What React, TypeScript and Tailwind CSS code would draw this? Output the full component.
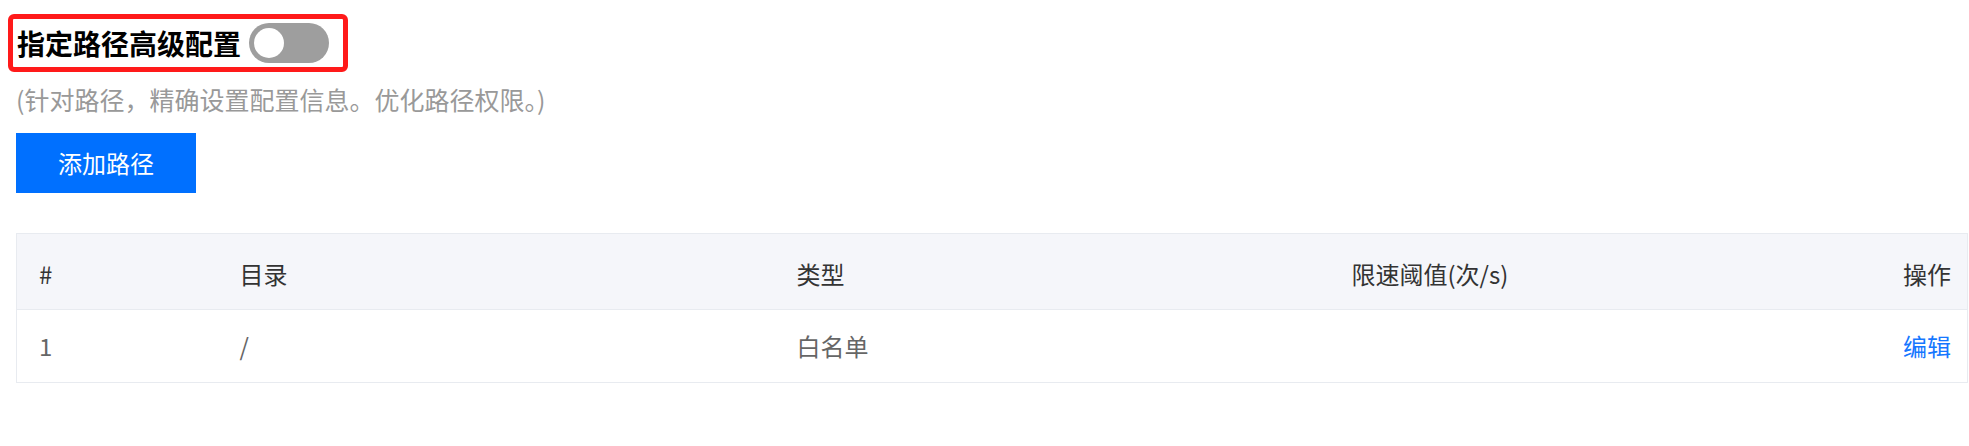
import { useState } from 'react'

const rows = [{ id: 1, dir: '/', type: '白名单', limit: '' }]

export default function App() {
  const [enabled, setEnabled] = useState(false)

  return (
    <div className="min-h-[446px] bg-white font-['Noto_Sans_CJK_SC','Noto_Sans',sans-serif]">
      {/* 标题 + 开关（红框标注） */}
      <div className="pl-2 pt-[14px]">
        <div className="inline-flex h-[58px] w-[340px] items-center rounded-md border-[5px] border-[#ff1a1a] pl-[4px]">
          <span className="text-[28px] leading-none font-bold text-black">指定路径高级配置</span>
          <button
            type="button"
            onClick={() => setEnabled(!enabled)}
            className={`ml-2 flex h-10 w-20 items-center rounded-full px-[5px] ${
              enabled ? 'justify-end bg-[#0070ff]' : 'justify-start bg-[#9e9e9e]'
            }`}
          >
            <span className="block h-[30px] w-[30px] rounded-full bg-white" />
          </button>
        </div>
      </div>

      <p className="mt-[12px] pl-[16px] text-[25px] leading-[30px] text-[#999999]">
        (针对路径，精确设置配置信息。优化路径权限。)
      </p>

      <button
        type="button"
        className="mt-[19px] ml-4 flex h-[60px] w-[180px] items-center justify-center bg-[#0070ff] text-[24px] text-white"
      >
        添加路径
      </button>

      {/* 路径列表 */}
      <table className="mt-10 ml-4 w-[1952px] table-fixed border-collapse border border-[#e8ebf0] text-[24px]">
        <colgroup>
          <col className="w-[201px]" />
          <col className="w-[557px]" />
          <col className="w-[555px]" />
          <col />
          <col className="w-[200px]" />
        </colgroup>
        <thead>
          <tr className="h-[76px] border-b border-[#e8ebf0] bg-[#f5f6fa] text-[#333333]">
            <th className="pl-[22px] pt-1 text-left font-normal">#</th>
            <th className="pl-[22px] pt-1 text-left font-normal">目录</th>
            <th className="pl-[22px] pt-1 text-left font-normal">类型</th>
            <th className="pl-[22px] pt-1 text-left font-normal">限速阈值(次/s)</th>
            <th className="pr-4 pt-1 text-right font-normal">操作</th>
          </tr>
        </thead>
        <tbody>
          {rows.map((r) => (
            <tr key={r.id} className="h-[73px] text-[#666666]">
              <td className="pl-[22px]">{r.id}</td>
              <td className="pl-[22px]">{r.dir}</td>
              <td className="pl-[22px]">{r.type}</td>
              <td className="pl-[22px]">{r.limit}</td>
              <td className="pr-4 text-right">
                <a className="cursor-pointer text-[#1677ff]">编辑</a>
              </td>
            </tr>
          ))}
        </tbody>
      </table>
    </div>
  )
}
